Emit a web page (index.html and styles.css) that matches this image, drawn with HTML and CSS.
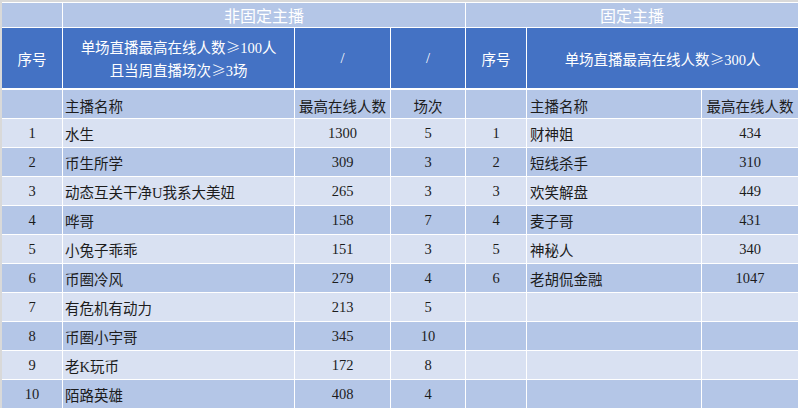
FILE: index.html
```html
<!DOCTYPE html>
<html lang="zh-CN">
<head>
<meta charset="utf-8">
<title>主播统计</title>
<link rel="stylesheet" href="styles.css">
</head>
<body>
<div class="sheet">
  <!-- row 1 -->
  <div class="c mid"></div>
  <div class="c mid title span3">非固定主播</div>
  <div class="c mid title span3">固定主播</div>

  <!-- row 2 -->
  <div class="c dark center">序号</div>
  <div class="c dark center two">单场直播最高在线人数<span class="ge">≥</span>100人<br>且当周直播场次<span class="ge">≥</span>3场</div>
  <div class="c dark center">/</div>
  <div class="c dark center">/</div>
  <div class="c dark center">序号</div>
  <div class="c dark center span2">单场直播最高在线人数<span class="ge">≥</span>300人</div>

  <!-- row 3 -->
  <div class="c mid head"></div>
  <div class="c mid head left">主播名称</div>
  <div class="c mid head center">最高在线人数</div>
  <div class="c mid head center">场次</div>
  <div class="c mid head"></div>
  <div class="c mid head left r">主播名称</div>
  <div class="c mid head center">最高在线人数</div>

  <!-- data -->
  <div class="c lt center">1</div><div class="c lt left">水生</div><div class="c lt center">1300</div><div class="c lt center">5</div>
  <div class="c lt center">1</div><div class="c lt left r">财神姐</div><div class="c lt center">434</div>

  <div class="c mid center">2</div><div class="c mid left">币生所学</div><div class="c mid center">309</div><div class="c mid center">3</div>
  <div class="c mid center">2</div><div class="c mid left r">短线杀手</div><div class="c mid center">310</div>

  <div class="c lt center">3</div><div class="c lt left">动态互关干净U我系大美妞</div><div class="c lt center">265</div><div class="c lt center">3</div>
  <div class="c lt center">3</div><div class="c lt left r">欢笑解盘</div><div class="c lt center">449</div>

  <div class="c mid center">4</div><div class="c mid left">哗哥</div><div class="c mid center">158</div><div class="c mid center">7</div>
  <div class="c mid center">4</div><div class="c mid left r">麦子哥</div><div class="c mid center">431</div>

  <div class="c lt center">5</div><div class="c lt left">小兔子乖乖</div><div class="c lt center">151</div><div class="c lt center">3</div>
  <div class="c lt center">5</div><div class="c lt left r">神秘人</div><div class="c lt center">340</div>

  <div class="c mid center">6</div><div class="c mid left">币圈冷风</div><div class="c mid center">279</div><div class="c mid center">4</div>
  <div class="c mid center">6</div><div class="c mid left r">老胡侃金融</div><div class="c mid center">1047</div>

  <div class="c lt center">7</div><div class="c lt left">有危机有动力</div><div class="c lt center">213</div><div class="c lt center">5</div>
  <div class="c lt"></div><div class="c lt"></div><div class="c lt"></div>

  <div class="c mid center">8</div><div class="c mid left">币圈小宇哥</div><div class="c mid center">345</div><div class="c mid center">10</div>
  <div class="c mid"></div><div class="c mid"></div><div class="c mid"></div>

  <div class="c lt center">9</div><div class="c lt left">老K玩币</div><div class="c lt center">172</div><div class="c lt center">8</div>
  <div class="c lt"></div><div class="c lt"></div><div class="c lt"></div>

  <div class="c mid center">10</div><div class="c mid left">陌路英雄</div><div class="c mid center">408</div><div class="c mid center">4</div>
  <div class="c mid"></div><div class="c mid"></div><div class="c mid"></div>
</div>
</body>
</html>
```

FILE: styles.css
```css
html, body {
  margin: 0;
  padding: 0;
  background: #ffffff;
}

body {
  font-family: "Liberation Serif", "Noto Sans CJK SC", serif;
  font-size: 14.5px;
  color: #1c1c1c;
}

.sheet {
  width: 796px;
  border-top: 2px solid #d9d9d9;
  border-left: 2px solid #d9d9d9;
  padding-top: 1px;
  display: grid;
  grid-template-columns: 60px 231px 95px 74px 60px 174px 96px;
  grid-template-rows: 24px 60px 29px repeat(10, 28px);
  gap: 1px;
  background: #ffffff;
}

.c {
  display: flex;
  align-items: center;
  white-space: nowrap;
  overflow: hidden;
}

.two {
  display: block;
  line-height: 22px;
  padding-top: 8px;
}

.mid { background: #b4c6e7; }
.lt { background: #d9e1f2; }
.dark { background: #4472c4; color: #ffffff; }

.title {
  color: #ffffff;
  font-size: 16px;
  justify-content: center;
}

.span3 { grid-column: span 3; }
.span2 { grid-column: span 2; }

.center { justify-content: center; text-align: center; }
.left { justify-content: flex-start; padding-left: 2px; }
.left.r { padding-left: 3px; }

.ge {
  font-family: "Noto Sans CJK SC", sans-serif;
  font-weight: 300;
}

.head {
  margin-top: 1px;
  padding-top: 2px;
}
```
